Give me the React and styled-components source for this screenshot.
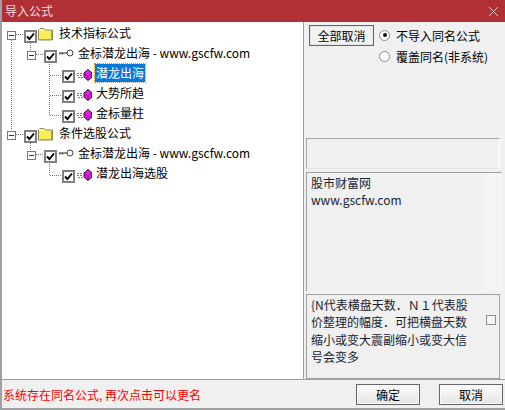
import React from "react";
import styled, { createGlobalStyle } from "styled-components";

const Global = createGlobalStyle`
  html, body { margin: 0; padding: 0; background: #f0f0f0; }
  body { font-family: "Noto Sans CJK SC", "Liberation Sans", sans-serif; font-size: 12px; color: #000; }
  * { box-sizing: border-box; }
`;

const Win = styled.div`
  width: 505px; height: 410px; display: flex; flex-direction: column;
  background: #f0f0f0; overflow: hidden;
  border-left: 2px solid #a0a0a0; border-bottom: 2px solid #a0a0a0;
`;
const TitleBar = styled.div`
  height: 22px; margin-left: -2px; padding: 0 6px 0 5px; flex: none;
  background: #b03036; color: #f4dcdc; display: flex; align-items: center; justify-content: space-between;
  font-size: 12px; line-height: 22px;
`;
const Body = styled.div`
  flex: none; height: 358px; display: flex; border-bottom: 1px solid #a0a0a0;
`;
const TreePane = styled.div`
  position: relative; width: 302px; height: 100%; background: #fff;
  border-right: 1px solid #9a9a9a; padding-top: 2px; flex: none;
`;
const Lines = styled.svg`
  position: absolute; left: -2px; top: -22px; pointer-events: none;
`;
const Row = styled.div`
  height: 20px; display: flex; align-items: center; white-space: nowrap;
  padding-left: ${p => p.$indent}px; font-size: 12px;
`;
const Expander = styled.span`
  position: relative; width: 9px; height: 9px; border: 1px solid #777; background: #fff;
  margin-right: 8px; flex: none; top: 1px;
  &::after { content: ""; position: absolute; left: 1px; right: 1px; top: 3px; height: 1px; background: #333; }
`;
const Check = styled.span`
  width: 13px; height: 13px; border: 2px solid #808080; background: #fff; flex: none;
  display: flex; align-items: center; justify-content: center; position: relative; top: 2px;
`;
const IconBox = styled.span`
  display: flex; flex: none; margin-left: 1px; width: 16px; height: 16px;
`;
const Label = styled.span`
  margin-left: ${p => p.$gap}px; padding: 0 1px; position: relative; top: -1px; height: 18px; line-height: 18px;
  ${p => p.$selected && `background: #0a78d7; color: #fff; outline: 1px dotted #e8902a; outline-offset: 0;`}
`;

const Side = styled.div`
  flex: 1; min-width: 0; display: flex; flex-direction: column; padding: 3px 3px 0 2px;
`;
const TopArea = styled.div`
  height: 113px; display: flex; align-items: flex-start; flex: none; padding-left: 3px;
`;
const SmallBtn = styled.button`
  width: 65px; height: 21px; padding: 0; font: inherit; font-size: 12px; color: #000;
  background: #f2f2f2; border: 1px solid #666; box-shadow: inset 0 0 0 1px #e4e4e4; flex: none;
`;
const Radios = styled.div`
  display: flex; flex-direction: column; gap: 3px; margin-left: 5px; padding-top: 1px;
`;
const RadioRow = styled.label`
  display: flex; align-items: center; height: 18px; font-size: 12px; white-space: nowrap;
`;
const Radio = styled.span`
  width: 11px; height: 11px; border-radius: 50%; background: #fff; border: 1px solid #8a8a8a; margin-right: 6px;
  display: flex; align-items: center; justify-content: center; flex: none;
  &::after { content: ""; width: 4px; height: 4px; border-radius: 50%; background: ${p => p.$on ? "#111" : "transparent"}; }
`;
const EmptyBox = styled.div`
  height: 31px; width: 194px; flex: none; border: 1px solid #a8a8a8; border-bottom-color: #e4e4e4; border-right-color: #fff;
`;
const InfoBox = styled.div`
  margin-top: 3px; height: 119px; flex: none; width: 196px; padding: 1px 4px; border: 1px solid #a0a0a0; border-right-color: #f8f8f8;
  border-bottom: none; line-height: 17px; font-size: 12px; white-space: pre-line;
  background: linear-gradient(to right, #f0f0f0 178px, #f5f4f2 178px); color: #1a2330;
`;
const NoteBox = styled.div`
  margin-top: 3px; flex: 1; width: 194px; display: flex; padding: 1px 4px 0; border: 1px solid #a0a0a0;
`;
const NoteText = styled.div`
  width: 164px; font-size: 12px; line-height: 17.3px; color: #1a2330; flex: none;
`;
const NoteCheck = styled.span`
  width: 10px; height: 10px; border: 1px solid #8e8e8e; background: #f4f4f4; margin: 19px 0 0 11px; flex: none;
`;
const Footer = styled.div`
  flex: 1; display: flex; align-items: center; justify-content: space-between; padding: 0 0 0 1px;
`;
const Status = styled.div`
  color: #f00; font-size: 12px; white-space: nowrap;
`;
const Actions = styled.div`
  display: flex; gap: 19px; padding-right: 2px;
`;
const ActBtn = styled.button`
  width: 64px; height: 21px; padding: 0; font: inherit; font-size: 12px; color: #000;
  background: linear-gradient(#fbfbfb, #e6e6e6); border: 1px solid #666; box-shadow: inset 0 0 0 1px #f8f8f8;
`;

const Tick = () => (
  <svg width="9" height="9" viewBox="0 0 9 9"><path d="M1 4.5L3.4 7L8 1.5" fill="none" stroke="#000" strokeWidth="1.9" /></svg>
);
const Folder = () => (
  <svg width="16" height="16" viewBox="0 0 16 16">
    <path d="M.5 4L2 2.5h4L7.5 4h7v10H.5z" fill="#f7ef55" stroke="#8f8a60" strokeWidth="1" />
    <path d="M1 4h5" stroke="#fffbd0" strokeWidth="1" />
    <path d="M13.5 5v8.5H2" stroke="#b5a830" strokeWidth="1" fill="none" />
  </svg>
);
const Key = () => (
  <svg width="16" height="16" viewBox="0 0 16 16">
    <circle cx="12" cy="7" r="3" fill="#fff" stroke="#444" strokeWidth="1" />
    <path d="M9 7H1M2 7v1.5M4.500 7v1.500" stroke="#222" strokeWidth="1" fill="none" />
  </svg>
);
const Formula = () => (
  <svg width="16" height="16" viewBox="0 0 16 16" shapeRendering="crispEdges">
    <path d="M1 7.500h6M1 9.500h6M2 11.500h5" stroke="#777" strokeWidth="1" strokeDasharray="2 1" />
    <path shapeRendering="auto" d="M12 3.500L16 7v4l-4 3.500L8 11V7z" fill="#ee18ee" stroke="#1a1a1a" strokeWidth="1" strokeLinejoin="miter" />
    <path shapeRendering="auto" d="M8.500 7.500L12 10.500L15.500 7.500M12 10.500V14" fill="none" stroke="#6a0a7a" strokeWidth="0.7" />
  </svg>
);
const Close = () => (
  <svg width="11" height="11" viewBox="0 0 11 11"><path d="M1 1l9 9M10 1l-9 9" stroke="#f0d0d0" strokeWidth="0.9" /></svg>
);

const TreeRow = ({ level, label, selected }) => {
  const indent = [5, 25, 60][level];
  return (
    <Row $indent={indent}>
      {level < 2 && <Expander />}
      <Check><Tick /></Check>
      <IconBox>{level === 0 ? <Folder /> : level === 1 ? <Key /> : <Formula />}</IconBox>
      <Label $gap={level === 0 ? 4 : 3} $selected={selected}>{label}</Label>
    </Row>
  );
};

const rows = [
  [0, "技术指标公式"],
  [1, "金标潜龙出海 - www.gscfw.com"],
  [2, "潜龙出海", true],
  [2, "大势所趋"],
  [2, "金标量柱"],
  [0, "条件选股公式"],
  [1, "金标潜龙出海 - www.gscfw.com"],
  [2, "潜龙出海选股"],
];

export default function App() {
  return (
    <Win>
      <Global />
      <TitleBar>导入公式<Close /></TitleBar>
      <Body>
        <TreePane>
          <Lines width="120" height="200" viewBox="0 0 120 200">
            <g stroke="#777" strokeWidth="1" strokeDasharray="1 1" fill="none" shapeRendering="crispEdges">
              <path d="M11.500 40V130M16 34.500H24M30.500 43V50M36 54.500H43M49.500 64V115M50 75.500H62M50 95.500H62M50 115.500H62" />
              <path d="M16 134.500H24M30.500 143V150M36 154.500H43M49.500 164V175M50 175.500H62" />
            </g>
          </Lines>
          {rows.map(([l, t, s], i) => <TreeRow key={i} level={l} label={t} selected={s} />)}
        </TreePane>
        <Side>
          <TopArea>
            <SmallBtn>全部取消</SmallBtn>
            <Radios>
              <RadioRow><Radio $on />不导入同名公式</RadioRow>
              <RadioRow><Radio />覆盖同名(非系统)</RadioRow>
            </Radios>
          </TopArea>
          <EmptyBox />
          <InfoBox>{"股市财富网\nwww.gscfw.com"}</InfoBox>
          <NoteBox>
            <NoteText>{"{N代表横盘天数．Ｎ１代表股价整理的幅度．可把横盘天数缩小或变大震副缩小或变大信号会变多"}</NoteText>
            <NoteCheck />
          </NoteBox>
        </Side>
      </Body>
      <Footer>
        <Status>系统存在同名公式, 再次点击可以更名</Status>
        <Actions>
          <ActBtn>确定</ActBtn>
          <ActBtn>取消</ActBtn>
        </Actions>
      </Footer>
    </Win>
  );
}
